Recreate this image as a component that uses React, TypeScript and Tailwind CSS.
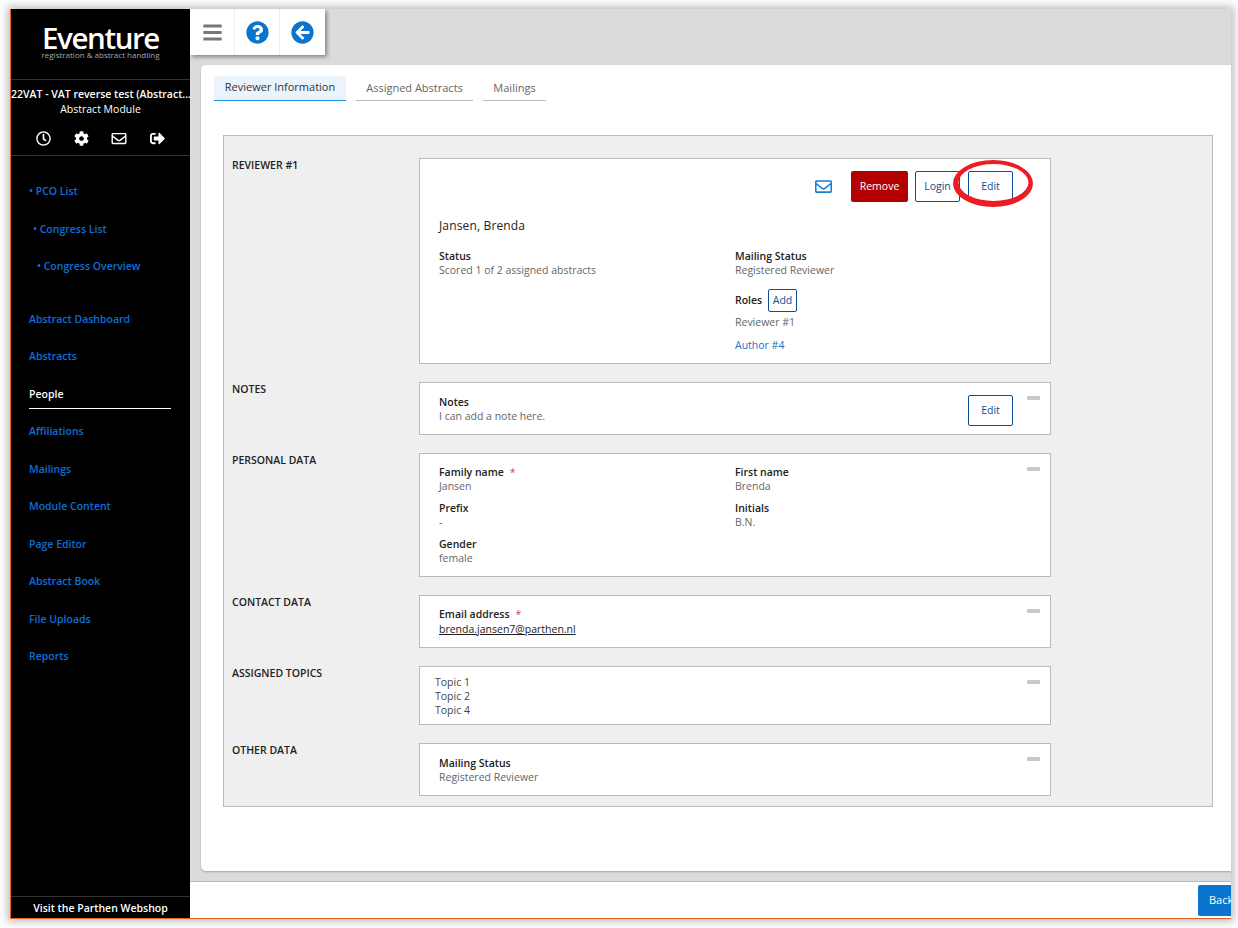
import { FaBars, FaQuestionCircle, FaArrowCircleLeft, FaRegClock, FaCog, FaRegEnvelope, FaSignOutAlt } from "react-icons/fa";
import type { ReactNode } from "react";

const navTop = ["PCO List", "Congress List", "Congress Overview"];
const navTopPad = ["pl-[18px]", "pl-[22px]", "pl-[26px]"];
const navMain = ["Abstract Dashboard", "Abstracts", "People", "Affiliations", "Mailings", "Module Content", "Page Editor", "Abstract Book", "File Uploads", "Reports"];

function Sidebar() {
  return (
    <aside className="w-[179px] shrink-0 bg-black text-white flex flex-col">
      {/* logo */}
      <div className="h-[71px] shrink-0 flex flex-col items-center border-b border-[#333] pt-[16px]">
        <div className="text-[29.5px] leading-[26px] font-semibold tracking-[-1.4px]">Eventure</div>
        <div className="text-[8px] leading-[8px] text-[#a8a8a8]">registration &amp; abstract handling</div>
      </div>

      <div className="h-[76px] shrink-0 border-b border-[#333] pt-[7px] text-center">
        <div className="text-[10.5px] leading-[15px] font-semibold whitespace-nowrap">22VAT - VAT reverse test (Abstract...</div>
        <div className="text-[10.5px] leading-[15px]">Abstract Module</div>
        <div className="flex justify-center gap-[23px] mt-[14px]">
          <FaRegClock className="w-[15px] h-[15px]" />
          <FaCog className="w-[15px] h-[15px]" />
          <FaRegEnvelope className="w-[16px] h-[15px] -ml-[1px]" />
          <FaSignOutAlt className="w-[15px] h-[15px]" />
        </div>
      </div>

      <nav className="pt-[17px] text-[10.5px] font-semibold text-[#0d6fd6]">
        {navTop.map((n, i) => (
          <div key={n} className={`h-[37.5px] leading-[37.5px] ${navTopPad[i]}`}>• {n}</div>
        ))}
        <div className="h-[15.5px]" />
        {navMain.map((n) => (
          <div key={n} className="h-[37.5px] flex items-center mx-[18px]">
            {n === "People" ? (
              <span className="w-[142px] h-[28px] leading-[27px] mt-[1px] text-white border-b border-white">{n}</span>
            ) : (
              n
            )}
          </div>
        ))}
      </nav>

      <div className="mt-auto h-[22px] border-t border-[#333] text-center text-[10.5px] leading-[22px] font-semibold">
        Visit the Parthen Webshop
      </div>
    </aside>
  );
}

function Field({ label, value, required, className }: { label: string; value: ReactNode; required?: boolean; className?: string }) {
  return (
    <div className={className}>
      <div className="text-[10.5px] leading-[14px] font-semibold text-[#222]">
        {label}
        {required && <span className="text-[#d0454a] font-normal ml-[6px]">*</span>}
      </div>
      <div className="text-[10.5px] leading-[14px] text-[#666]">{value}</div>
    </div>
  );
}

function OutlineButton({ children, className }: { children: ReactNode; className: string }) {
  return (
    <button className={`bg-white border border-[#0b4f94] rounded-[2px] text-[10.5px] text-[#0b4f94] ${className}`}>
      {children}
    </button>
  );
}

function Section({ label, className, children, collapse = true }: { label: string; className: string; children: ReactNode; collapse?: boolean }) {
  return (
    <div className="flex">
      <div className="w-[195px] shrink-0 pl-[8px] text-[10.5px] leading-[14px] font-semibold text-[#222]">{label}</div>
      <div className={`relative w-[632px] bg-white border border-[#bbb] ${className}`}>
        {children}
        {collapse && <div className="absolute right-[10px] top-[13px] w-[13px] h-[4px] rounded-[1px] bg-[#c8c8c8]" />}
      </div>
    </div>
  );
}

function Panel() {
  return (
    <div className="ml-[22px] mt-[34px] w-[990px] h-[672px] bg-[#efefef] border border-[#bbb] pt-[22px] flex flex-col gap-[18px]">
      <Section label="REVIEWER #1" className="h-[206px] px-[19px] pt-[12px]" collapse={false}>
        <div className="flex items-center justify-end pr-[18px]">
          <FaRegEnvelope className="w-[19px] h-[17px] text-[#1a7fd4] mr-[18px]" />
          <button className="w-[57px] h-[31px] bg-[#b30000] rounded-[2px] text-white text-[10.5px] font-medium mr-[7px]">Remove</button>
          <OutlineButton className="w-[45px] h-[31px] mr-[8px]">Login</OutlineButton>
          <OutlineButton className="w-[45px] h-[31px]">Edit</OutlineButton>
        </div>
        <div className="mt-[16px] text-[12px] leading-[16px] font-medium tracking-[0.15px] text-[#222]">Jansen, Brenda</div>
        <div className="grid grid-cols-[296px_1fr] mt-[15px]">
          <Field label="Status" value="Scored 1 of 2 assigned abstracts" />
          <div>
            <Field label="Mailing Status" value="Registered Reviewer" />
            <div className="flex items-center mt-[12px]">
              <span className="w-[33px] text-[10.5px] font-semibold text-[#222]">Roles</span>
              <OutlineButton className="w-[29px] h-[23px]">Add</OutlineButton>
            </div>
            <div className="text-[10.5px] leading-[14px] text-[#666] mt-[3px]">Reviewer #1</div>
            <div className="text-[10.5px] leading-[14px] text-[#1a6fc9] mt-[9px]">Author #4</div>
          </div>
        </div>
      </Section>

      <Section label="NOTES" className="h-[53px] pl-[19px] pt-[12px]">
        <Field label="Notes" value="I can add a note here." />
        <OutlineButton className="absolute right-[37px] top-[12px] w-[45px] h-[31px]">Edit</OutlineButton>
      </Section>

      <Section label="PERSONAL DATA" className="h-[124px] pl-[19px] pt-[11px]">
        <div className="grid grid-cols-[296px_1fr] gap-y-[8px]">
          <Field label="Family name" value="Jansen" required />
          <Field label="First name" value="Brenda" />
          <Field label="Prefix" value="-" />
          <Field label="Initials" value="B.N." />
          <Field label="Gender" value="female" />
        </div>
      </Section>

      <Section label="CONTACT DATA" className="h-[53px] pl-[19px] pt-[11px]">
        <Field label="Email address" value={<span className="block mt-[1px] text-[#222] underline">brenda.jansen7@parthen.nl</span>} required />
      </Section>

      <Section label="ASSIGNED TOPICS" className="h-[59px] pl-[15px] pt-[8px]">
        <div className="text-[10.5px] leading-[14px] text-[#444]">
          <div>Topic 1</div>
          <div>Topic 2</div>
          <div>Topic 4</div>
        </div>
      </Section>

      <Section label="OTHER DATA" className="h-[53px] pl-[19px] pt-[12px]">
        <Field label="Mailing Status" value="Registered Reviewer" />
      </Section>
    </div>
  );
}

export default function App() {
  return (
    <div className="relative w-[1238px] h-[928px] bg-white pt-[9px] pl-[10px] overflow-hidden font-['Open_Sans',sans-serif]">
      <div className="w-[1221px] h-[910px] flex bg-[#dbdbdb] border-l border-b border-[#e0622a] shadow-[0_0_8px_3px_rgba(0,0,0,0.25)] overflow-hidden">
        <Sidebar />
        <main className="flex-1 min-w-0 flex flex-col">
          {/* toolbar */}
          <div className="flex h-[46px] w-[135px] shrink-0 bg-white shadow-[2px_2px_4px_rgba(0,0,0,0.4)]">
            <div className="w-[45px] flex items-center justify-center border-r border-[#f0f0f0]">
              <FaBars className="w-[21px] h-[21px] text-[#777]" />
            </div>
            <div className="w-[45px] flex items-center justify-center border-r border-[#f0f0f0]">
              <FaQuestionCircle className="w-[23px] h-[23px] text-[#0a74cf]" />
            </div>
            <div className="w-[45px] flex items-center justify-center">
              <FaArrowCircleLeft className="w-[23px] h-[23px] text-[#0a74cf]" />
            </div>
          </div>

          {/* content card */}
          <div className="ml-[11px] mt-[10px] h-[806px] shrink-0 bg-white rounded-tl-[5px] rounded-bl-[5px] shadow-[0_1px_2px_rgba(0,0,0,0.25)]">
            <div className="flex items-end h-[36px] ml-[13px]">
              <div className="w-[132px] h-[25px] bg-[#ebf4fc] border-b border-[#1a8ce0] rounded-t-[3px] text-center text-[11px] leading-[21px] text-[#333]">Reviewer Information</div>
              <div className="ml-[10px] w-[117px] h-[25px] border-b border-[#bbb] text-center text-[11px] leading-[23px] text-[#666]">Assigned Abstracts</div>
              <div className="ml-[10px] w-[63px] h-[25px] border-b border-[#bbb] text-center text-[11px] leading-[23px] text-[#666]">Mailings</div>
            </div>
            <Panel />
          </div>

          {/* footer */}
          <div className="mt-[10px] flex-1 bg-white border-t border-[#bbb] flex justify-end overflow-hidden pt-[3px]">
            <button className="w-[33px] h-[31px] shrink-0 bg-[#0a74cf] rounded-l-[2px] text-white text-[11px] text-left pl-[11px] whitespace-nowrap overflow-hidden">Back</button>
          </div>
        </main>
      </div>

      {/* hand-drawn highlight around Edit */}
      <svg className="absolute left-[945px] top-[152px] w-[100px] h-[64px] pointer-events-none" viewBox="0 0 100 64">
        <path
          fillRule="evenodd"
          fill="#ec1c24"
          d="M8 31.5a40 23.5 0 1 0 80 0a40 23.5 0 1 0 -80 0zM13.5 30.5a35 18.5 0 1 0 70 0a35 18.5 0 1 0 -70 0z"
        />
      </svg>
    </div>
  );
}
